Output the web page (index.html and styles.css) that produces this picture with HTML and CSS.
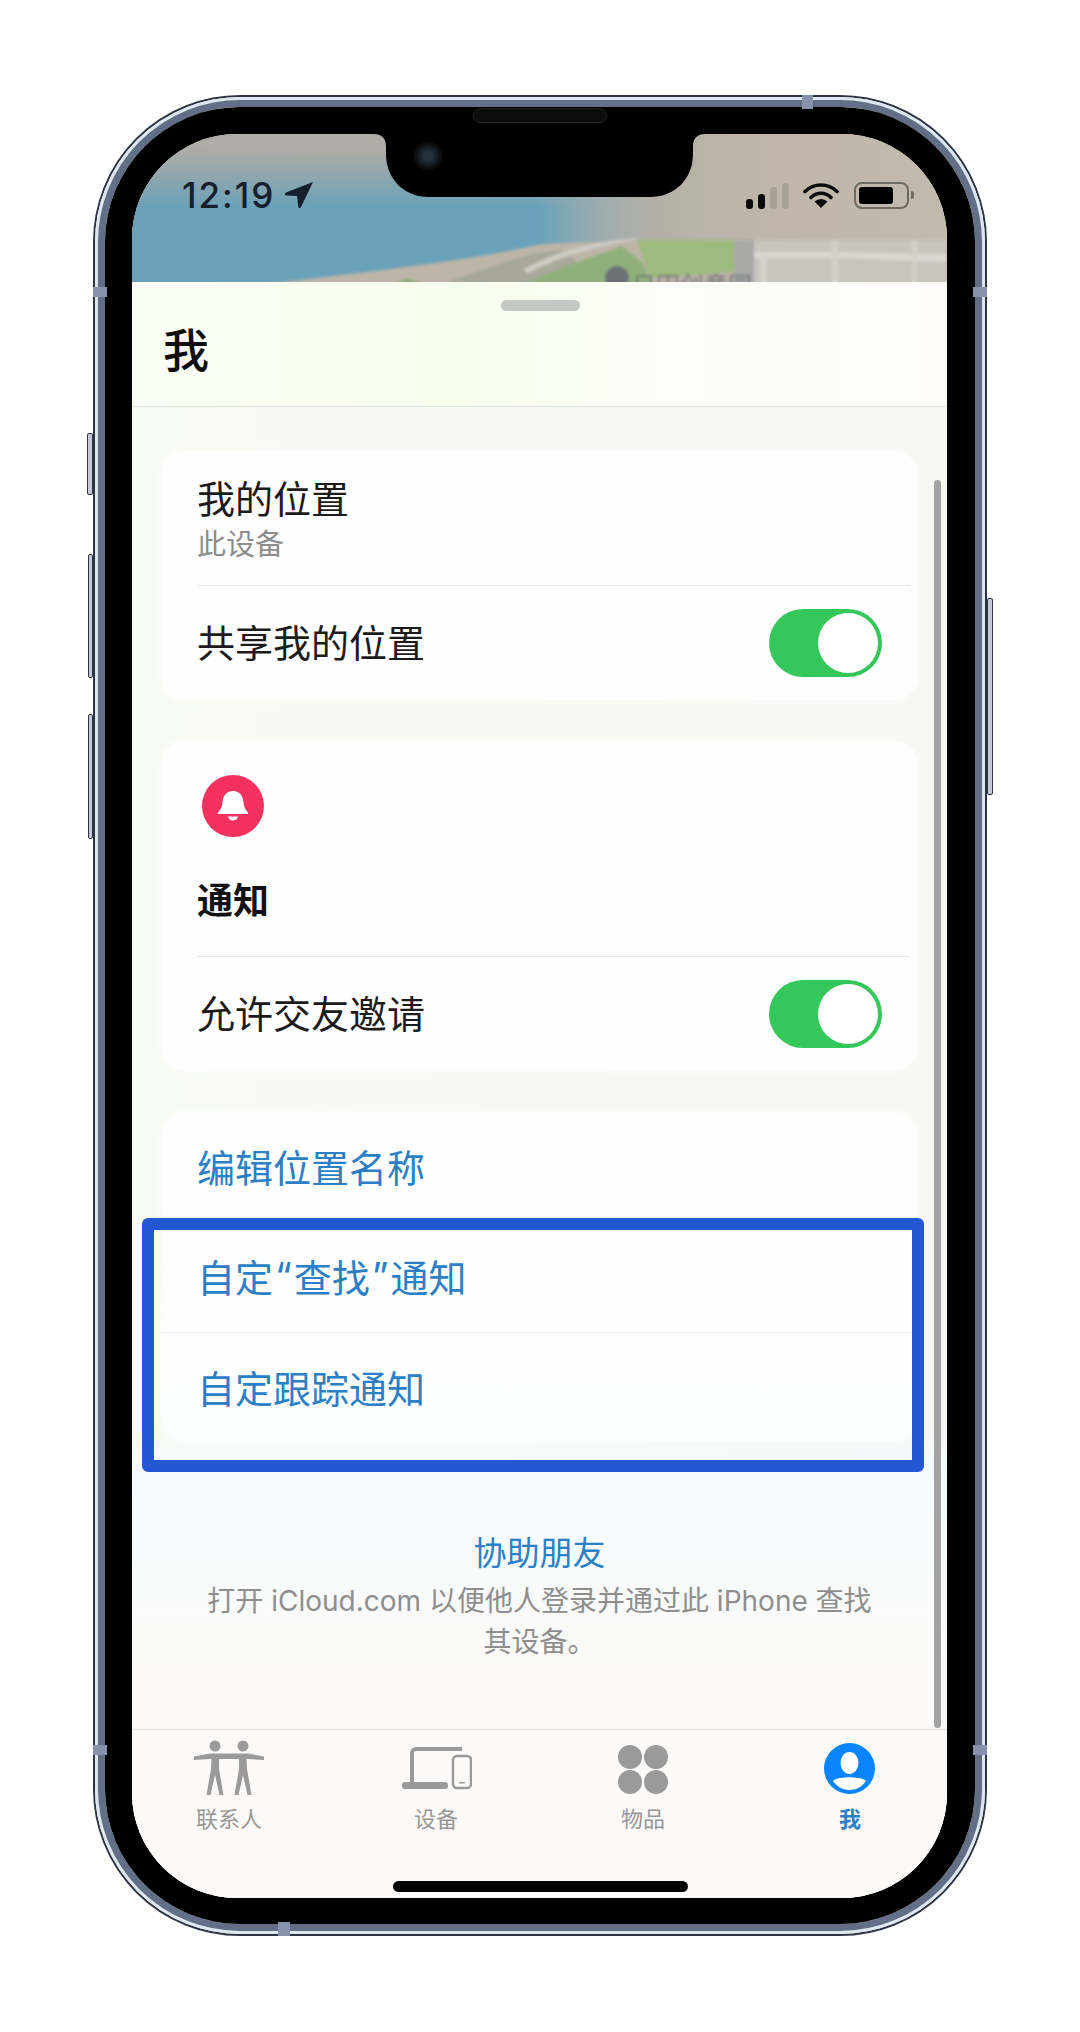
FILE: index.html
```html
<!DOCTYPE html>
<html lang="zh-CN">
  <head>
    <meta charset="utf-8">
    <title>查找</title>
    <link rel="stylesheet" href="styles.css">
  </head>
  <body>
    <div class="phone">
      <i class="side-btn btn-mute"></i>
      <i class="side-btn btn-up"></i>
      <i class="side-btn btn-down"></i>
      <i class="side-btn btn-power"></i>
      <div class="rim">
        <div class="metal">
          <div class="bezel">
            <i class="speaker"></i>
            <div class="screen">

              <div class="top-area">
                <svg class="map" viewBox="0 0 815 148" preserveAspectRatio="none">
                  <defs>
                    <linearGradient id="base" x1="0" x2="1" y1="0" y2="0">
                      <stop offset="0" stop-color="#aeaca6"/>
                      <stop offset="0.55" stop-color="#b0aca4"/>
                      <stop offset="0.8" stop-color="#c0b7a9"/>
                      <stop offset="1" stop-color="#c2baae"/>
                    </linearGradient>
                    <linearGradient id="sea" x1="0" x2="1" y1="0" y2="0">
                      <stop offset="0" stop-color="#6ba1b8"/>
                      <stop offset="0.5" stop-color="#69a2ba"/>
                      <stop offset="0.67" stop-color="#b3b7b3" stop-opacity="0"/>
                    </linearGradient>
                    <linearGradient id="fade" x1="0" x2="0" y1="0" y2="1">
                      <stop offset="0.1" stop-color="#000"/>
                      <stop offset="0.5" stop-color="#fff"/>
                    </linearGradient>
                    <mask id="seaMask"><rect width="815" height="148" fill="url(#fade)"/></mask>
                    <filter id="soft"><feGaussianBlur stdDeviation="1.6"/></filter>
                  </defs>
                  <rect width="815" height="148" fill="url(#base)"/>
                  <rect width="815" height="148" fill="url(#sea)" mask="url(#seaMask)"/>
                  <g filter="url(#soft)">
                    <path d="M135 150 C230 138 330 128 410 110 L470 108 L500 106 L815 106 V150Z" fill="#bdb5a8"/>
                    <path d="M310 150 C340 140 370 128 400 120 L430 116 L470 150Z" fill="#a7a89a"/>
                    <path d="M392 150 C430 132 470 120 490 112 L510 128 L520 150Z" fill="#8fb07a"/>
                    <path d="M262 150 L275 144 L292 150Z" fill="#8fae75"/>
                    <path d="M490 108 C450 116 420 126 395 140 L392 135 C430 114 470 106 510 104Z" fill="#cfccc4"/>
                    <path d="M505 106 H602 V138 L518 144 Z" fill="#9dba7f"/>
                    <rect x="602" y="106" width="20" height="44" fill="#a9aaa8"/>
                    <rect x="622" y="106" width="193" height="44" fill="#c7c5bc"/>
                    <path d="M622 118 H700 L815 120 V128 L700 124 H622Z" fill="#d9d7d0"/>
                    <rect x="628" y="120" width="7" height="30" fill="#d5d3cc"/>
                    <rect x="700" y="106" width="6" height="44" fill="#d3d1c9"/>
                    <rect x="780" y="106" width="5" height="44" fill="#d3d1c9"/>
                    <circle cx="485" cy="144" r="12" fill="#6d7074"/>
                    <text class="map-label" x="500" y="160">日田创意园</text>
                  </g>
                </svg>
                <div class="status">
                  <div class="status-left">
                    <span class="clock">12:19</span>
                    <svg class="arrow" viewBox="0 0 30 28"><path d="M29 1 L2 11.500 Q-.5 13.500 2 14.500 L13 15 L14.300 26 Q15.500 28.500 17 26 Z" fill="#14202e"/></svg>
                  </div>
                  <div class="status-right">
                    <div class="signal">
                      <i class="bar bar1"></i>
                      <i class="bar bar2"></i>
                      <i class="bar bar3 off"></i>
                      <i class="bar bar4 off"></i>
                    </div>
                    <svg class="wifi" viewBox="0 0 36 26">
                      <path d="M2 9.500 A23 23 0 0 1 34 9.500 M8 15.500 A14 14 0 0 1 28 15.500" fill="none" stroke="#0a0a0a" stroke-width="3.600" stroke-linecap="round"/>
                      <path d="M18 26 L11.500 19.500 A9.500 9.500 0 0 1 24.500 19.500 Z" fill="#0a0a0a"/>
                    </svg>
                    <div class="battery"><i class="battery-level"></i></div>
                    <i class="battery-cap"></i>
                  </div>
                </div>
              </div>

              <svg class="notch" viewBox="0 0 331 63"><path d="M0 0H331C325 0 319 3 319 12V20C319 45 301 63 276 63H55C30 63 12 45 12 20V12C12 3 6 0 0 0Z" fill="#000"/></svg>
              <i class="camera"></i>

              <div class="sheet">
                <div class="sheet-head">
                  <i class="handle"></i>
                  <h1 class="sheet-title">我</h1>
                </div>

                <div class="sheet-body">
                  <section class="card">
                    <div class="row row-me line">
                      <div class="row-name">我的位置</div>
                      <div class="row-sub">此设备</div>
                    </div>
                    <div class="row row-toggle">
                      <span class="row-name">共享我的位置</span>
                      <span class="toggle"><i class="knob"></i></span>
                    </div>
                  </section>

                  <section class="card">
                    <div class="notify-head line">
                      <span class="bell">
                        <svg viewBox="0 0 62 62" width="62" height="62">
                          <path d="M31 16c-6 0-10 4.500-10.500 11c-.4 5-1.500 7-4.500 10.500c-.6 .8 0 1.500 1 1.500h28c1 0 1.600-.7 1-1.500c-3-3.500-4.100-5.500-4.500-10.500C41 20.500 37 16 31 16Z M26 41.500h10a5 4 0 0 1-10 0Z" fill="#fff"/>
                        </svg>
                      </span>
                      <div class="notify-title">通知</div>
                    </div>
                    <div class="row row-toggle">
                      <span class="row-name">允许交友邀请</span>
                      <span class="toggle"><i class="knob"></i></span>
                    </div>
                  </section>

                  <section class="card card-links">
                    <div class="row row-link">编辑位置名称</div>
                    <div class="row row-link">自定<span class="quote">“</span>查找<span class="quote">”</span>通知</div>
                    <div class="row row-link line-top">自定跟踪通知</div>
                  </section>

                  <div class="help">
                    <div class="help-link">协助朋友</div>
                    <p class="help-text">打开 iCloud.com 以便他人登录并通过此 iPhone 查找<br>其设备。</p>
                  </div>
                </div>

                <nav class="tabs">
                  <div class="tab">
                    <svg class="tab-icon" width="72" height="56" viewBox="0 0 72 56">
                      <g fill="#9a9a9a">
                        <circle cx="22" cy="6" r="5.500"/>
                        <circle cx="50" cy="6" r="5.500"/>
                        <path d="M1 16.500 L17 13.500 H55 L71 16.500 V20 L55 19 H53.500 L54 29 L58.500 55 H54.500 L50 35 L45.500 55 H41.500 L46 29 L46 19 H26 L26 29 L30.500 55 H26.500 L22 35 L17.500 55 H13.500 L18 29 L18.500 19 H17 L1 20 Z"/>
                      </g>
                    </svg>
                    <span class="tab-label">联系人</span>
                  </div>
                  <div class="tab">
                    <svg class="tab-icon" width="72" height="56" viewBox="-2 -7 72 56">
                      <path d="M10 35V6a4 4 0 0 1 4-4H60" fill="none" stroke="#9a9a9a" stroke-width="4"/>
                      <rect x="0" y="35" width="46" height="7" rx="3" fill="#9a9a9a"/>
                      <rect x="51" y="9" width="18" height="32" rx="4" fill="none" stroke="#9a9a9a" stroke-width="2.500"/>
                      <rect x="57" y="35" width="6" height="1.500" fill="#9a9a9a"/>
                    </svg>
                    <span class="tab-label">设备</span>
                  </div>
                  <div class="tab">
                    <svg class="tab-icon" width="72" height="56" viewBox="-11 -5 72 56">
                      <g fill="#9a9a9a">
                        <circle cx="12" cy="12" r="12"/>
                        <circle cx="38" cy="12" r="12"/>
                        <circle cx="12" cy="37" r="12"/>
                        <circle cx="38" cy="37" r="12"/>
                      </g>
                    </svg>
                    <span class="tab-label">物品</span>
                  </div>
                  <div class="tab tab-active">
                    <svg class="tab-icon" width="72" height="56" viewBox="-10 -3 72 56">
                      <circle cx="25.500" cy="25.500" r="25.500" fill="#0a84ff"/>
                      <ellipse cx="25.500" cy="20" rx="9" ry="11" fill="#fff"/>
                      <path d="M9 38C13 33 38 33 42 38C38 44 32 47 25.500 47C19 47 13 44 9 38Z" fill="#fff"/>
                    </svg>
                    <span class="tab-label">我</span>
                  </div>
                </nav>
                <i class="home-bar"></i>
              </div>

              <i class="scrollbar"></i>
              <div class="highlight"></div>
            </div>
          </div>
        </div>
      </div>
      <i class="band band-top"></i>
      <i class="band band-bottom"></i>
      <i class="band band-left1"></i>
      <i class="band band-right1"></i>
      <i class="band band-left2"></i>
      <i class="band band-right2"></i>
    </div>
  </body>
</html>
```

FILE: styles.css
```css
html, body {
  background-color: #fff;
  margin: 0;
  padding: 0;
}
body {
  height: 2032px;
  overflow: hidden;
  font-family: Inter, "Noto Sans CJK SC", sans-serif;
  color: #111;
}
i {
  display: block;
}

/* phone shell */
.phone {
  position: relative;
  box-sizing: border-box;
  width: 894px;
  height: 1841px;
  margin: 95px 0 0 93px;
  border: 2px solid #2b3442;
  border-radius: 147px;
}
.rim {
  height: 100%;
  box-sizing: border-box;
  border: 3px solid #dde7f1;
  border-radius: 145px;
}
.metal {
  height: 100%;
  box-sizing: border-box;
  border: 7px solid #636f86;
  border-radius: 142px;
}
.bezel {
  position: relative;
  height: 100%;
  box-sizing: border-box;
  padding: 27px 28px 26px 27px;
  background: #000;
  border-radius: 135px;
}
.side-btn {
  position: absolute;
  box-sizing: border-box;
  width: 6px;
  background: #c3cad6;
  border: 1px solid #2b3442;
  border-radius: 2px;
}
.btn-mute { left: -8px; top: 336px; height: 62px; }
.btn-up { left: -7px; top: 457px; width: 5px; height: 124px; }
.btn-down { left: -7px; top: 617px; width: 5px; height: 125px; }
.btn-power { right: -8px; top: 501px; height: 197px; }
.band {
  position: absolute;
  background: #8792ad;
}
.band-top { left: 707px; top: -2px; width: 11px; height: 14px; }
.band-bottom { left: 183px; bottom: -2px; width: 12px; height: 14px; }
.band-left1 { left: -2px; top: 190px; width: 14px; height: 10px; }
.band-right1 { right: -2px; top: 190px; width: 14px; height: 10px; }
.band-left2 { left: -2px; top: 1648px; width: 14px; height: 10px; }
.band-right2 { right: -2px; top: 1648px; width: 14px; height: 10px; }
.speaker {
  position: absolute;
  left: 368px;
  top: 1px;
  width: 134px;
  height: 15px;
  box-sizing: border-box;
  background: #0c0c0c;
  border: 1px solid #232323;
  border-radius: 8px;
}

/* screen */
.screen {
  position: relative;
  display: flex;
  flex-direction: column;
  height: 100%;
  overflow: hidden;
  background: #fbfaf8;
  border-radius: 105px;
}
.top-area {
  position: relative;
  flex: 0 0 148px;
}
.map {
  position: absolute;
  inset: 0;
  width: 100%;
  height: 100%;
}
.map-label {
  font-size: 24px;
  fill: #6d7074;
}
.notch {
  position: absolute;
  left: 242px;
  top: 0;
  width: 331px;
  height: 63px;
}
.camera {
  position: absolute;
  left: 282px;
  top: 8px;
  width: 28px;
  height: 28px;
  background: radial-gradient(circle, #26333c 0 20%, #0c0f12 60%, #050505 100%);
  border-radius: 50%;
}
.status {
  position: relative;
  display: flex;
  justify-content: space-between;
  padding: 46px 33px 0 50px;
}
.status-left {
  display: flex;
  align-items: center;
  gap: 9px;
}
.clock {
  font-size: 35px;
  line-height: 30px;
  font-weight: 500;
  letter-spacing: 2px;
  color: #14202e;
}
.arrow {
  width: 30px;
  height: 28px;
}
.status-right {
  display: flex;
  align-items: center;
}
.signal {
  display: flex;
  align-items: flex-end;
  gap: 5px;
  height: 27px;
  margin-right: 14px;
}
.bar {
  width: 7px;
  background: #0a0a0a;
  border-radius: 3px;
}
.bar.off {
  background: #a7a196;
}
.bar1 { height: 10px; }
.bar2 { height: 15px; }
.bar3 { height: 22px; }
.bar4 { height: 26px; }
.wifi {
  width: 36px;
  height: 26px;
  margin-right: 15px;
}
.battery {
  box-sizing: border-box;
  width: 55px;
  height: 27px;
  padding: 3px;
  border: 2px solid #6e6b62;
  border-radius: 8px;
}
.battery-level {
  width: 34px;
  height: 100%;
  background: #000;
  border-radius: 3px;
}
.battery-cap {
  width: 3px;
  height: 8px;
  margin-left: 2px;
  background: #6e6b62;
  border-radius: 0 3px 3px 0;
}

/* sheet */
.sheet {
  position: relative;
  flex: 1;
  display: flex;
  flex-direction: column;
  min-height: 0;
  border-radius: 10px 10px 0 0;
  background: #fbfaf8;
}
.sheet-head {
  flex: 0 0 125px;
  box-sizing: border-box;
  padding: 18px 0 0 31px;
  background: linear-gradient(90deg, #fbfef4 0%, #f8feee 40%, #fcfdf6 65%, #fdfcf9 100%);
  border-bottom: 1px solid #dcdcd8;
}
.handle {
  width: 79px;
  height: 11px;
  margin: 0 auto;
  position: relative;
  left: -15px;
  background: #c5c7c1;
  border-radius: 6px;
}
.sheet-title {
  margin: 9px 0 0;
  font-size: 46px;
  line-height: 60px;
  font-weight: 500;
  color: #0c0c0c;
}
.sheet-body {
  flex: 1;
  min-height: 0;
  display: flex;
  flex-direction: column;
  gap: 41px;
  padding: 44px 29px 0 29px;
  background:
    linear-gradient(180deg, rgba(246, 252, 253, 0) 1020px, #f5fbfd 1060px, #f8fbfb 1150px, #fbfaf8 1260px),
    linear-gradient(90deg, #f8fbf3 0%, #f7f7f4 100%);
}
.card {
  background: #fefefe;
  border-radius: 24px;
  box-shadow: 0 0 10px rgba(255, 255, 255, .7);
}
.row {
  box-sizing: border-box;
  padding: 0 36px;
  font-size: 38px;
}
.row-name {
  font-size: 38px;
  line-height: 46px;
  color: #1b1b1b;
}
.row-me {
  height: 135px;
  padding-top: 25px;
}
.row-sub {
  margin-top: 3px;
  font-size: 29px;
  line-height: 40px;
  color: #8d8d8d;
}
.line {
  position: relative;
}
.line::after {
  content: "";
  position: absolute;
  left: 36px;
  right: 8px;
  bottom: 0;
  height: 1px;
  background: #e5e5e3;
}
.row-toggle {
  display: flex;
  align-items: center;
  justify-content: space-between;
  height: 114px;
  padding-right: 36px;
}
.toggle {
  display: flex;
  justify-content: flex-end;
  align-items: center;
  box-sizing: border-box;
  width: 113px;
  height: 68px;
  padding: 4px;
  background: #34c759;
  border-radius: 34px;
}
.knob {
  width: 60px;
  height: 60px;
  background: #fff;
  border-radius: 50%;
}
.notify-head {
  height: 216px;
  box-sizing: border-box;
  padding: 34px 36px 0;
}
.bell {
  display: block;
  width: 62px;
  height: 62px;
  margin-left: 5px;
  background: #f5315f;
  border-radius: 50%;
}
.notify-title {
  margin-top: 40px;
  font-size: 36px;
  line-height: 48px;
  font-weight: 700;
  color: #111;
}
.card-links {
  background: linear-gradient(180deg, #fefefe 0%, #fcfdfe 100%);
}
.row-link {
  display: flex;
  align-items: center;
  height: 110px;
  padding-bottom: 3px;
  color: #2b7fc7;
}
.quote {
  padding: 0 2px;
}
.line-top {
  border-top: 1px solid #ececea;
}
.help {
  margin-top: 48px;
  text-align: center;
}
.help-link {
  font-size: 33px;
  line-height: 44px;
  color: #2b7fc7;
}
.help-text {
  margin: 6px 0 0;
  font-size: 28px;
  line-height: 41px;
  color: #8e8e8e;
}

/* tab bar */
.tabs {
  flex: 0 0 169px;
  box-sizing: border-box;
  display: grid;
  grid-template-columns: repeat(4, 207px);
  margin: 0 -6.500px;
  padding-top: 10px;
  background: #fbfaf8;
  border-top: 1px solid #dcdcda;
}
.tab {
  display: flex;
  flex-direction: column;
  align-items: center;
  height: 92px;
}
.tab-icon {
  flex: none;
}
.tab-label {
  margin-top: 8px;
  font-size: 22px;
  line-height: 30px;
  color: #979797;
}
.tab-active .tab-label {
  font-weight: 700;
  color: #2b7fc7;
}
.home-bar {
  position: absolute;
  left: 261px;
  bottom: 6px;
  width: 295px;
  height: 11px;
  background: #000;
  border-radius: 6px;
}

/* overlays */
.scrollbar {
  position: absolute;
  left: 802px;
  top: 346px;
  width: 7px;
  height: 1248px;
  background: #a3a3a3;
  border-radius: 4px;
}
.highlight {
  position: absolute;
  left: 10px;
  top: 1084px;
  box-sizing: border-box;
  width: 782px;
  height: 254px;
  border: 12px solid #2458d2;
  border-radius: 6px;
}
```
